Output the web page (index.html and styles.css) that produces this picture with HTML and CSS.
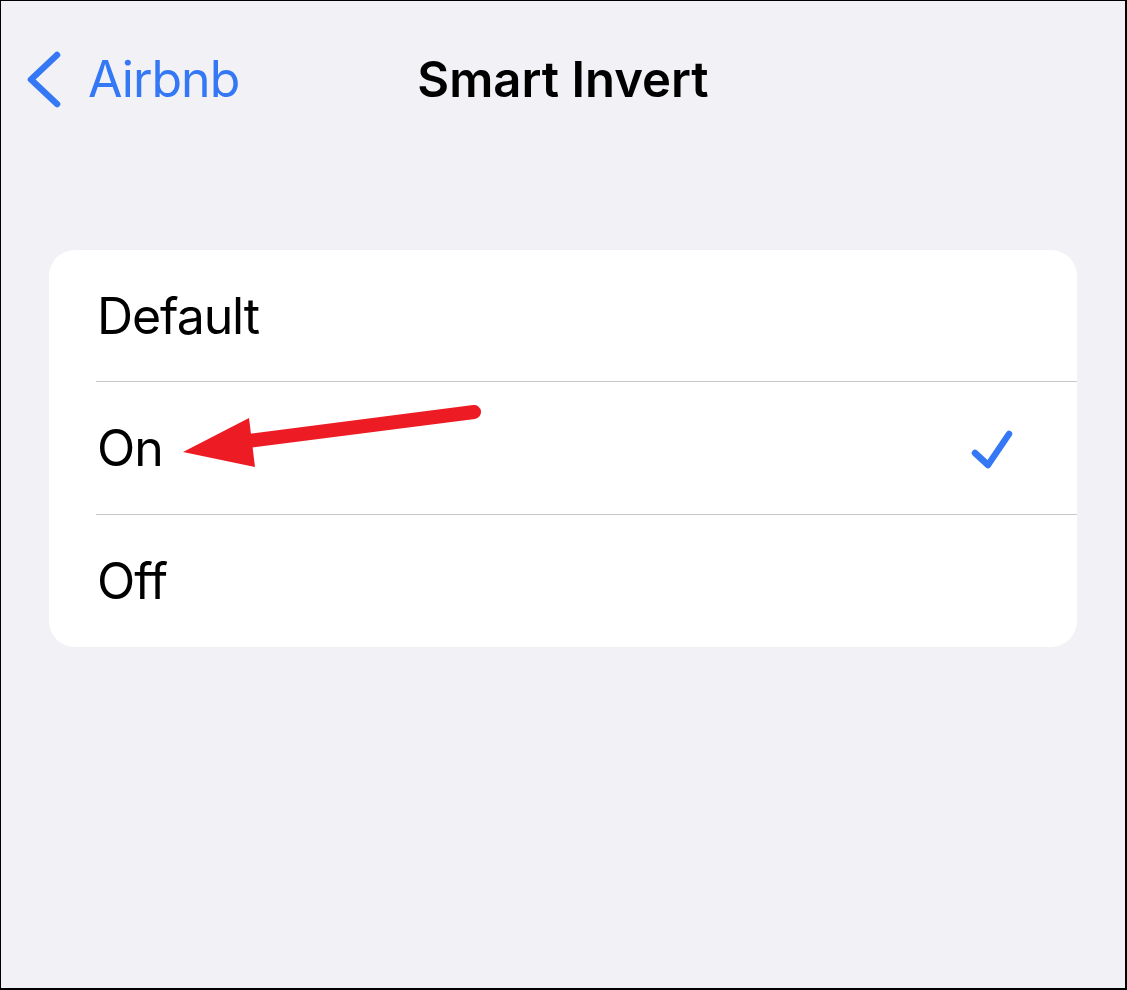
FILE: index.html
```html
<!DOCTYPE html>
<html lang="en">
<head>
    <meta charset="UTF-8">
    <meta name="viewport" content="width=device-width, initial-scale=1.0">
    <title>Smart Invert</title>
    <link rel="stylesheet" href="styles.css">
</head>
<body>
    <div id="screen">
        <div id="nav">
            <a class="back" href="#">
                <svg class="chevron" width="40" height="64" viewBox="0 0 40 64">
                    <path d="M34 8 L8 32.5 L34 57" fill="none" stroke="#3478f6" stroke-width="6.5" stroke-linecap="round" stroke-linejoin="round"/>
                </svg>
                <span>Airbnb</span>
            </a>
            <h1 class="title">Smart Invert</h1>
            <div></div>
        </div>

        <ul id="opcoes">
            <li class="opcao">Default</li>
            <li class="opcao">
                <span>On</span>
                <svg class="check" width="48" height="46" viewBox="0 0 48 46">
                    <path d="M8 25 L21 37 L42 6" fill="none" stroke="#3478f6" stroke-width="6.5" stroke-linecap="round" stroke-linejoin="round"/>
                </svg>
            </li>
            <li class="opcao">Off</li>
        </ul>

        <svg class="seta" width="1127" height="990" viewBox="0 0 1127 990">
            <line x1="474" y1="412" x2="240" y2="442" stroke="#ed1c24" stroke-width="14" stroke-linecap="round"/>
            <polygon points="183,452 249,418 255,467" fill="#ed1c24"/>
        </svg>
    </div>
</body>
</html>
```

FILE: styles.css
```css
body {
    margin: 0;
    padding: 0;
    font-family: Inter, "Noto Sans", sans-serif;
}
#screen {
    position: relative;
    width: 1127px;
    height: 990px;
    box-sizing: border-box;
    border: 1px solid #000;
    border-width: 1px 2px 2px 1px;
    background: #f1f1f6;
    overflow: hidden;
}
#nav {
    display: grid;
    grid-template-columns: 1fr auto 1fr;
    align-items: center;
    height: 156px;
}
.back {
    display: flex;
    align-items: center;
    gap: 25px;
    padding-left: 22px;
    color: #3478f6;
    text-decoration: none;
    font-size: 50px;
    letter-spacing: -1px;
}
.title {
    margin: 0;
    font-size: 49px;
    font-weight: 600;
    color: #000;
    letter-spacing: 0;
}
#opcoes {
    list-style: none;
    margin: 93px 48px 0 48px;
    padding: 0;
    background: #fff;
    border-radius: 26px;
    overflow: hidden;
}
.opcao {
    display: flex;
    align-items: center;
    justify-content: space-between;
    height: 132px;
    margin-left: 47px;
    padding-left: 1px;
    padding-right: 62px;
    font-size: 50px;
    color: #000;
    letter-spacing: -1.1px;
    border-top: 1px solid #c8c8cc;
}
.opcao:first-child {
    border-top: none;
    height: 131px;
}
.check {
    margin-top: 6px;
}
.seta {
    position: absolute;
    left: -1px;
    top: -1px;
    pointer-events: none;
}
```
